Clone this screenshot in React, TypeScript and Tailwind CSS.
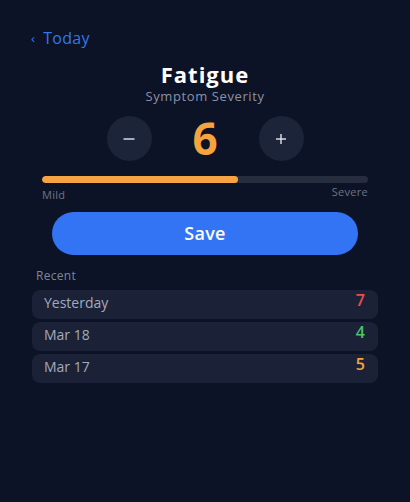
import { useState } from "react";

const history = [
  { label: "Yesterday", value: 7, color: "text-[#ef4d4a]" },
  { label: "Mar 18", value: 4, color: "text-[#4cc46a]" },
  { label: "Mar 17", value: 5, color: "text-[#f5a33c]" },
];

export default function App() {
  const [level, setLevel] = useState(6);

  return (
    <div
      className="w-[410px] h-[502px] bg-[#0c1326] text-white flex flex-col"
      style={{ fontFamily: '"Open Sans", "Noto Sans", sans-serif' }}
    >
      <button className="self-start mt-[28px] ml-[31px] flex items-center gap-[8px] text-[#3576eb] text-[16px] leading-[20px] tracking-[0.3px]">
        <span className="text-[13px]">‹</span>
        <span>Today</span>
      </button>

      <h1 className="mt-[12px] text-center text-[22px] leading-[28px] font-bold tracking-[1px]">Fatigue</h1>
      <p className="text-center text-[13px] leading-[16px] tracking-[0.6px] text-[#8a92a6]">Symptom Severity</p>

      <div className="mt-[12px] flex items-center justify-center">
        <button
          onClick={() => setLevel((l) => Math.max(0, l - 1))}
          className="w-[45px] h-[45px] rounded-full bg-[#1c2439] flex items-center justify-center"
        >
          <svg width="12" height="12" viewBox="0 0 12 12" stroke="#e5e7ee" strokeWidth="1.4">
            <line x1="0.5" y1="6" x2="11.5" y2="6" />
          </svg>
        </button>
        <span className="w-[107px] text-center text-[44px] leading-[45px] font-bold text-[#f5a33c]">{level}</span>
        <button
          onClick={() => setLevel((l) => Math.min(10, l + 1))}
          className="w-[45px] h-[45px] rounded-full bg-[#1c2439] flex items-center justify-center"
        >
          <svg width="12" height="12" viewBox="0 0 12 12" stroke="#e5e7ee" strokeWidth="1.4">
            <line x1="1" y1="6" x2="11" y2="6" />
            <line x1="6" y1="1" x2="6" y2="11" />
          </svg>
        </button>
      </div>

      <div className="mx-[42px] mt-[15px]">
        <div className="h-[7px] rounded-full bg-[#252d3f] overflow-hidden">
          <div className="h-full rounded-full bg-[#f6a443]" style={{ width: `${level * 10}%` }} />
        </div>
        <div className="flex justify-between items-start text-[11px] leading-[14px] tracking-[0.3px] text-[#6c7487]">
          <span className="mt-[5px]">Mild</span>
          <span className="mt-[2px]">Severe</span>
        </div>
      </div>

      <button className="mx-[52px] mt-[10px] h-[43px] rounded-full bg-[#3374f4] text-[18px] font-semibold tracking-[0.3px]">
        Save
      </button>

      <p className="ml-[36px] mt-[13px] text-[12px] leading-[16px] tracking-[0.3px] text-[#7d8597]">Recent</p>

      <div className="mx-[32px] mt-[6px] flex flex-col gap-[3px]">
        {history.map((h) => (
          <div key={h.label} className="h-[29px] rounded-[8px] bg-[#1b2238] flex items-start justify-between pl-[12px] pr-[13px]">
            <span className="mt-[3px] text-[14px] leading-[20px] text-[#a3aabb]">{h.label}</span>
            <span className={`text-[16px] leading-[20px] font-semibold ${h.color}`}>{h.value}</span>
          </div>
        ))}
      </div>
    </div>
  );
}
